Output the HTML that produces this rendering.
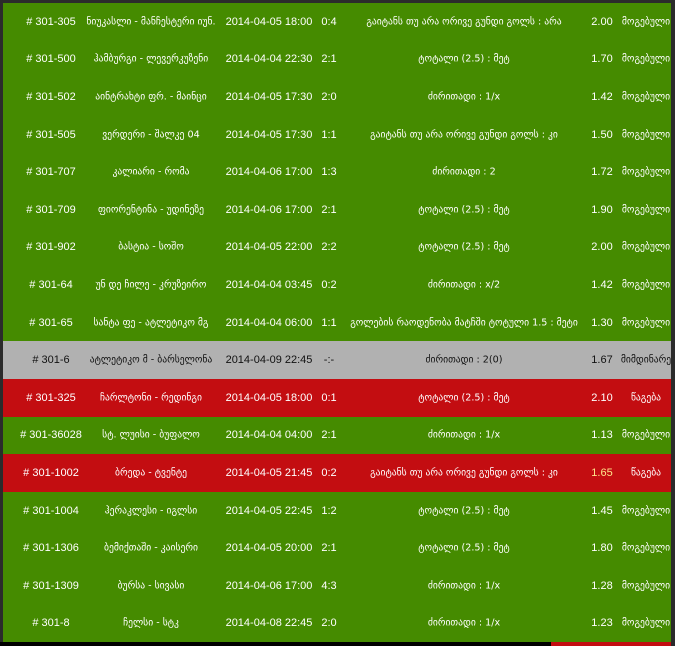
<!DOCTYPE html>
<html><head><meta charset="utf-8"><style>
body{margin:0;width:675px;height:646px;background:#2b2b2b;overflow:hidden;font-family:"DejaVu Sans","Liberation Sans",sans-serif;}
#t{position:absolute;left:3px;top:3px;width:668px;}
.r{position:relative;height:37.6px;background:#458b00;color:#fff;font-size:9.6px;}
.r span{position:absolute;top:50%;transform:translate(-50%,-50%);white-space:nowrap;}
.r span.n{font-family:"Liberation Sans",sans-serif;font-size:11px;}
.g{background:#b1b1b1!important;color:#111!important;}
.x{background:#c30d11!important;}
#b1{position:absolute;left:0;top:642px;width:551px;height:4px;background:#000;}
#b2{position:absolute;left:551px;top:642px;width:120px;height:4px;background:#c30d11;}
</style></head><body><div id="t">
</div>
<div id="b1"></div><div id="b2"></div>
<script>
const rows=[
["# 301-305","ნიუკასლი - მანჩესტერი იუნ.","2014-04-05 18:00","0:4","გაიტანს თუ არა ორივე გუნდი გოლს : არა","2.00","მოგებული",""],
["# 301-500","ჰამბურგი - ლევერკუზენი","2014-04-04 22:30","2:1","ტოტალი (2.5) : მეტ","1.70","მოგებული",""],
["# 301-502","აინტრახტი ფრ. - მაინცი","2014-04-05 17:30","2:0","ძირითადი : 1/x","1.42","მოგებული",""],
["# 301-505","ვერდერი - შალკე 04","2014-04-05 17:30","1:1","გაიტანს თუ არა ორივე გუნდი გოლს : კი","1.50","მოგებული",""],
["# 301-707","კალიარი - რომა","2014-04-06 17:00","1:3","ძირითადი : 2","1.72","მოგებული",""],
["# 301-709","ფიორენტინა - უდინეზე","2014-04-06 17:00","2:1","ტოტალი (2.5) : მეტ","1.90","მოგებული",""],
["# 301-902","ბასტია - სოშო","2014-04-05 22:00","2:2","ტოტალი (2.5) : მეტ","2.00","მოგებული",""],
["# 301-64","უნ დე ჩილე - კრუზეირო","2014-04-04 03:45","0:2","ძირითადი : x/2","1.42","მოგებული",""],
["# 301-65","სანტა ფე - ატლეტიკო მგ","2014-04-04 06:00","1:1","გოლების რაოდენობა მატჩში ტოტული 1.5 : მეტი","1.30","მოგებული",""],
["# 301-6","ატლეტიკო მ - ბარსელონა","2014-04-09 22:45","-:-","ძირითადი : 2(0)","1.67","მიმდინარე","g"],
["# 301-325","ჩარლტონი - რედინგი","2014-04-05 18:00","0:1","ტოტალი (2.5) : მეტ","2.10","წაგება","x"],
["# 301-36028","სტ. ლუისი - ბუფალო","2014-04-04 04:00","2:1","ძირითადი : 1/x","1.13","მოგებული",""],
["# 301-1002","ბრედა - ტვენტე","2014-04-05 21:45","0:2","გაიტანს თუ არა ორივე გუნდი გოლს : კი","1.65","წაგება","x y"],
["# 301-1004","ჰერაკლესი - იგლსი","2014-04-05 22:45","1:2","ტოტალი (2.5) : მეტ","1.45","მოგებული",""],
["# 301-1306","ბემიქთაში - კაისერი","2014-04-05 20:00","2:1","ტოტალი (2.5) : მეტ","1.80","მოგებული",""],
["# 301-1309","ბურსა - სივასი","2014-04-06 17:00","4:3","ძირითადი : 1/x","1.28","მოგებული",""],
["# 301-8","ჩელსი - სტკ","2014-04-08 22:45","2:0","ძირითადი : 1/x","1.23","მოგებული",""]];
const xs=[48,148,266,326,461,599,643];
let h="";
for(const r of rows){
 const cls=r[7];
 h+='<div class="r '+cls+'">';
 for(let i=0;i<7;i++){
  let st='left:'+xs[i]+'px';
  if(i==5&&cls.includes('y'))st+=';color:#ffe38a';
  const n=(i==0||i==2||i==3||i==5)?' class="n"':'';
  h+='<span'+n+' style="'+st+'">'+r[i]+'</span>';
 }
 h+='</div>';
}
document.getElementById('t').innerHTML=h;
</script>
</body></html>
